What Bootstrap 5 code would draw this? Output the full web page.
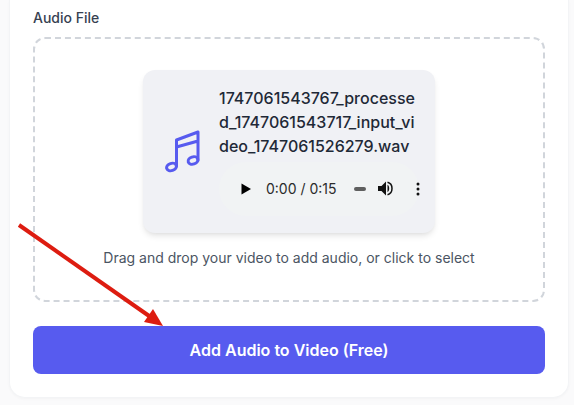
<!DOCTYPE html>
<html lang="en">
<head>
<meta charset="utf-8">
<title>Audio File</title>
<link href="https://cdn.jsdelivr.net/npm/bootstrap@5.3.0/dist/css/bootstrap.min.css" rel="stylesheet">
<style>
html,body{height:405px;overflow:hidden}
body{background:#fafafb;font-family:Inter,"Liberation Sans",sans-serif;color:#1f2937;position:relative}
.shell{margin:0 5px 7px 9px;height:398px;background:#fff;border:1px solid #f3f4f6;border-top:0;border-radius:0 0 16px 16px;padding:9px 23px 0;box-shadow:0 1px 3px rgba(0,0,0,.03)}
.field-label{font-size:14px;line-height:17px;font-weight:500;color:#374151;margin-bottom:11px}
.drop{height:265px;border:2px dashed #d1d5db;border-radius:12px;padding-top:31px}
.file-box{width:292px;height:163px;background:#f0f1f5;border-radius:12px;box-shadow:0 4px 6px -1px rgba(0,0,0,.1),0 2px 4px -2px rgba(0,0,0,.06);padding:15px 20px 17px 22px}
.note-icon{margin-right:18px}
.file-name{width:196px;font-size:16px;line-height:24px;font-weight:500;color:#1f2937;word-break:break-all}
.player{width:200px;height:54px;margin-top:4px;border-radius:27px;background:#f1f3f4;padding:0 0 0 21px;font-size:14px;color:#2b2b2b}
.time-text{margin-left:14px}
.ctl-mute{margin-left:17px}
.ctl-vol{margin-left:12px}
.ctl-more{margin-left:22px}
.hint{font-size:14px;line-height:20px;color:#4b5563;margin-top:15px}
.go{height:48px;margin-top:24px;width:100%;background:#575bef;border:0;border-radius:8px;color:#fff;font-size:16px;font-weight:600}
.go:hover{background:#575bef;color:#fff}
.arrow{position:absolute;left:0;top:0;pointer-events:none}
</style>
</head>
<body>
<div class="shell">
  <div class="field-label">Audio File</div>
  <div class="drop d-flex flex-column align-items-center">
    <div class="file-box d-flex align-items-center">
      <svg width="36" height="44" viewBox="0 0 36 44" fill="none" stroke="#575bef" stroke-width="3" stroke-linecap="round" stroke-linejoin="round" class="flex-shrink-0 note-icon">
        <ellipse cx="6.500" cy="38" rx="5" ry="3.600" transform="rotate(-18 6.500 38)"/>
        <ellipse cx="28" cy="31.500" rx="5" ry="3.600" transform="rotate(-18 28 31.500)"/>
        <path d="M11.500 37V11L33 3V31M11.500 18L33 12"/>
      </svg>
      <div>
        <div class="file-name">1747061543767_processed_1747061543717_input_video_1747061526279.wav</div>
        <div class="player d-flex align-items-center">
          <svg width="12" height="12" viewBox="0 0 12 12" class="flex-shrink-0"><path d="M1.500 .5V11.500L11 6z" fill="#000"/></svg>
          <span class="time-text text-nowrap">0:00 / 0:15</span>
          <svg width="12" height="4" viewBox="0 0 12 4" class="flex-shrink-0 ctl-mute"><rect width="12" height="4" rx="2" fill="#5f5f5f"/></svg>
          <svg width="16" height="15" viewBox="0 0 16 15" class="flex-shrink-0 ctl-vol"><path d="M0 5H3.500L8 .5V14.500L3.500 10H0zM9.500 3.800C11.800 4.800 11.800 10.200 9.500 11.200z" fill="#111"/><path d="M9.500 1.300C15.500 2.800 15.500 12.200 9.500 13.700" fill="none" stroke="#111" stroke-width="1.500"/></svg>
          <svg width="4" height="14" viewBox="0 0 4 14" class="flex-shrink-0 ctl-more"><circle cx="2" cy="2" r="1.500" fill="#111"/><circle cx="2" cy="7" r="1.500" fill="#111"/><circle cx="2" cy="12" r="1.500" fill="#111"/></svg>
        </div>
      </div>
    </div>
    <div class="hint">Drag and drop your video to add audio, or click to select</div>
  </div>
  <button class="btn go" type="button">Add Audio to Video (Free)</button>
</div>
<svg class="arrow" width="574" height="405" viewBox="0 0 574 405">
  <path d="M19 225L152 318" stroke="#dd1c10" stroke-width="4" fill="none"/>
  <path d="M163 326L144 322L153 309z" fill="#dd1c10"/>
</svg>
</body>
</html>
